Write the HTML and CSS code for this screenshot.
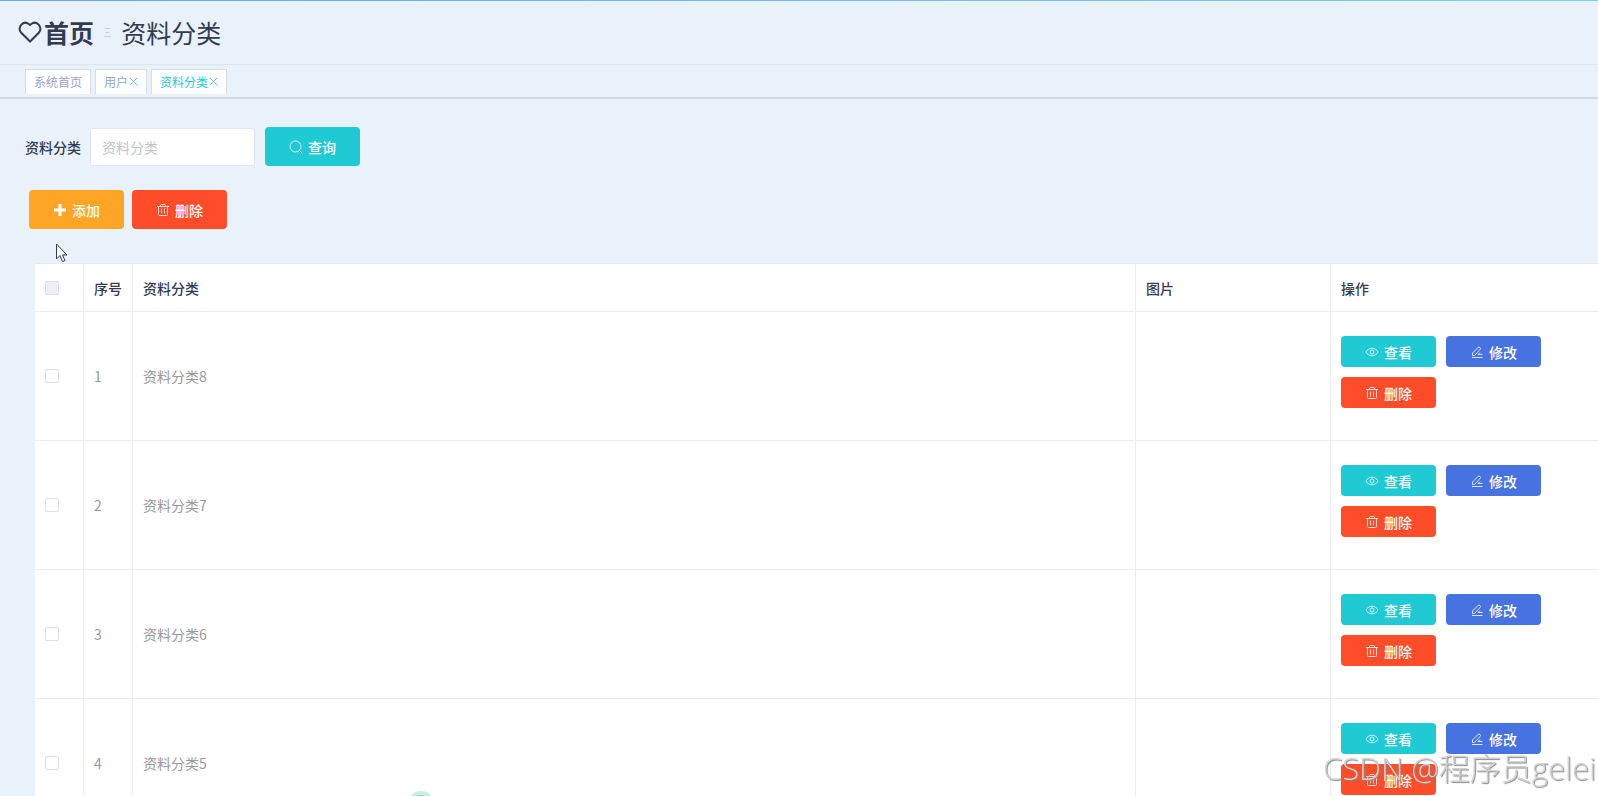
FILE: index.html
```html
<!DOCTYPE html>
<html lang="zh-CN">
  <head>
    <meta charset="UTF-8" />
    <meta name="viewport" content="width=device-width, initial-scale=1.0" />
    <title>资料分类</title>
    <link rel="stylesheet" href="styles.css">
  </head>
  <body>
    <!-- 图标 -->
    <svg class="sprite" aria-hidden="true">
      <symbol id="i-eye" viewBox="0 0 14 14">
        <path d="M1 7C3.500 2 10.500 2 13 7C10.500 12 3.500 12 1 7Z" />
        <circle cx="7" cy="7" r="2" />
      </symbol>
      <symbol id="i-edit" viewBox="0 0 14 14">
        <path d="M2.500 8L8 2.500Q9 1.500 10 2.500Q11 3.500 10 4.500L4.500 10.500H2.500ZM2 12.500H12.500M10 7.500L8 9.500H12.500" />
      </symbol>
      <symbol id="i-delete" viewBox="0 0 14 14">
        <path d="M1 3.500H13M4 3.500L5 1.500H9L10 3.500M2.500 3.500V11.500Q2.500 12.500 3.500 12.500H10.500Q11.500 12.500 11.500 11.500V3.500M5.500 5.500V10.500M8.500 5.500V10.500" />
      </symbol>
    </svg>

    <header class="breadcrumb">
      <svg class="heart" viewBox="0 0 24 24"><path d="M12 21.500L3 12.500C-1 7 5 .5 10 3.500L12 5L14 3.500C19 .5 25 7 21 12.500Z" /></svg>
      <a class="home" href="#">首页</a>
      <span class="separator">Ξ</span>
      <span class="current">资料分类</span>
    </header>

    <nav class="tags">
      <a class="tag" href="#">系统首页</a>
      <a class="tag" href="#">用户<svg class="close" viewBox="0 0 10 10"><path d="M1 1L9 9M9 1L1 9" /></svg></a>
      <a class="tag active" href="#">资料分类<svg class="close" viewBox="0 0 10 10"><path d="M1 1L9 9M9 1L1 9" /></svg></a>
    </nav>

    <main class="content">
      <form class="search">
        <label for="category">资料分类</label>
        <input id="category" type="text" placeholder="资料分类" />
        <button type="button" class="btn teal">
          <svg class="icon" viewBox="0 0 14 14"><circle cx="6.500" cy="6.500" r="5.500" /><path d="M10.500 10.500L13.500 13.500" /></svg>查询
        </button>
      </form>

      <div class="actions">
        <button type="button" class="btn orange">
          <svg class="icon plus" viewBox="0 0 14 14"><path d="M7 1V13M1 7H13" /></svg>添加
        </button>
        <button type="button" class="btn red"><svg class="icon"><use href="#i-delete" /></svg>删除</button>
      </div>

      <table class="list">
        <colgroup>
          <col class="col-check" />
          <col class="col-index" />
          <col class="col-name" />
          <col class="col-image" />
          <col class="col-action" />
        </colgroup>
        <thead>
          <tr>
            <th><input type="checkbox" class="check all" aria-label="全选" /></th>
            <th>序号</th>
            <th>资料分类</th>
            <th>图片</th>
            <th>操作</th>
          </tr>
        </thead>
        <tbody>
          <tr>
            <td><input type="checkbox" class="check" aria-label="选择1" /></td>
            <td>1</td>
            <td>资料分类8</td>
            <td></td>
            <td>
              <div class="row-actions">
                <button type="button" class="btn small teal"><svg class="icon"><use href="#i-eye" /></svg>查看</button>
                <button type="button" class="btn small blue"><svg class="icon"><use href="#i-edit" /></svg>修改</button>
                <button type="button" class="btn small red"><svg class="icon"><use href="#i-delete" /></svg>删除</button>
              </div>
            </td>
          </tr>
          <tr>
            <td><input type="checkbox" class="check" aria-label="选择2" /></td>
            <td>2</td>
            <td>资料分类7</td>
            <td></td>
            <td>
              <div class="row-actions">
                <button type="button" class="btn small teal"><svg class="icon"><use href="#i-eye" /></svg>查看</button>
                <button type="button" class="btn small blue"><svg class="icon"><use href="#i-edit" /></svg>修改</button>
                <button type="button" class="btn small red"><svg class="icon"><use href="#i-delete" /></svg>删除</button>
              </div>
            </td>
          </tr>
          <tr>
            <td><input type="checkbox" class="check" aria-label="选择3" /></td>
            <td>3</td>
            <td>资料分类6</td>
            <td></td>
            <td>
              <div class="row-actions">
                <button type="button" class="btn small teal"><svg class="icon"><use href="#i-eye" /></svg>查看</button>
                <button type="button" class="btn small blue"><svg class="icon"><use href="#i-edit" /></svg>修改</button>
                <button type="button" class="btn small red"><svg class="icon"><use href="#i-delete" /></svg>删除</button>
              </div>
            </td>
          </tr>
          <tr>
            <td><input type="checkbox" class="check" aria-label="选择4" /></td>
            <td>4</td>
            <td>资料分类5</td>
            <td></td>
            <td>
              <div class="row-actions">
                <button type="button" class="btn small teal"><svg class="icon"><use href="#i-eye" /></svg>查看</button>
                <button type="button" class="btn small blue"><svg class="icon"><use href="#i-edit" /></svg>修改</button>
                <button type="button" class="btn small red"><svg class="icon"><use href="#i-delete" /></svg>删除</button>
              </div>
            </td>
          </tr>
        </tbody>
      </table>
    </main>

    <svg class="cursor" viewBox="0 0 12 20"><path d="M1 1V16L4.500 12.500L7 18.500L9.500 17.500L7 12H11.500Z" /></svg>
    <div class="bubble"></div>
    <div class="watermark">CSDN @程序员gelei</div>
  </body>
</html>
```
FILE: styles.css
```css
* {
  box-sizing: border-box;
}
html {
  height: 100%;
}
body {
  height: 100%;
  margin: 0;
  padding-top: 1px;
  overflow: hidden;
  background: #e9f1fb linear-gradient(90deg, #68a5fb, #74d3ea) top / 100% 1px no-repeat;
  color: #333b50;
  font-family: "Noto Sans CJK SC", sans-serif;
  font-size: 14px;
}
a {
  color: inherit;
  text-decoration: none;
}
svg {
  fill: none;
  stroke: currentColor;
}
.sprite {
  display: none;
}

/* 面包屑 */
.breadcrumb {
  display: flex;
  align-items: center;
  height: 64px;
  padding: 0 18px 2px;
  border-bottom: 1px solid #dde5ef;
  font-size: 25px;
}
.heart {
  width: 24px;
  height: 24px;
  margin-right: 2px;
  stroke-width: 2;
}
.home {
  font-weight: bold;
}
.separator {
  margin: 0 10px;
  color: #c9d0da;
  font-size: 12px;
}

/* 标签栏 */
.tags {
  display: flex;
  gap: 4px;
  height: 34px;
  padding: 4px 25px 0;
  border-bottom: 2px solid #d0dae5;
}
.tag {
  display: flex;
  align-items: center;
  height: 25px;
  padding: 0 8px 1px;
  background: #fff;
  border: 1px solid #d8dce5;
  border-bottom: none;
  color: #9aa5c4;
  font-size: 12px;
}
.tag.active {
  color: #22cad6;
}
.close {
  width: 9px;
  height: 9px;
  margin-left: 1px;
  color: #5fbfbb;
}

.content {
  padding: 28px 0 0 25px;
}
.search {
  display: flex;
  align-items: center;
}
.search label {
  font-weight: 500;
}
.search input {
  width: 165px;
  height: 38px;
  margin: 0 10px 0 9px;
  padding: 0 11px;
  background: #fff;
  border: 1px solid #e0e6f0;
  border-radius: 3px;
  font: inherit;
}
.search input::placeholder {
  color: #c0c4cc;
}
.actions {
  display: flex;
  gap: 8px;
  margin: 24px 0 34px 4px;
}

.btn {
  display: flex;
  align-items: center;
  justify-content: center;
  gap: 5px;
  width: 95px;
  height: 39px;
  padding: 0;
  border: none;
  border-radius: 4px;
  color: #fff;
  font: inherit;
  font-weight: 500;
  cursor: pointer;
}
.btn.small {
  height: 31px;
}
.icon {
  width: 14px;
  height: 14px;
  opacity: 0.8;
}
.plus {
  stroke-width: 3;
  opacity: 1;
}
.teal {
  background: #20cad5;
}
.blue {
  background: #4673e0;
}
.orange {
  background: #ffa526;
}
.red {
  background: #ff4c29;
}

/* 表格 */
.list {
  width: calc(100% - 10px);
  margin-left: 10px;
  table-layout: fixed;
  border-collapse: separate;
  border-spacing: 0;
  border-top: 1px solid #e6e9f0;
  background: #fff;
}
.list th,
.list td {
  padding: 0 10px;
  border-right: 1px solid #ebedf1;
  border-bottom: 1px solid #ebedf1;
  text-align: left;
}
.list th:last-child,
.list td:last-child {
  border-right: none;
}
.list th {
  height: 48px;
  font-weight: 500;
}
.list td {
  color: #999;
}
.col-check {
  width: 49px;
}
.col-index {
  width: 49px;
}
.col-image {
  width: 195px;
}
.col-action {
  width: 267px;
}
.check {
  display: block;
  width: 14px;
  height: 14px;
  margin: 0;
  appearance: none;
  background: #fff;
  border: 1px solid #dcdfe6;
  border-radius: 2px;
}
.check.all {
  background: #edf0fa;
}
.row-actions {
  display: flex;
  flex-wrap: wrap;
  gap: 10px;
  padding: 24px 0 32px;
}

/* 浮层 */
.cursor {
  position: fixed;
  top: 243px;
  left: 55px;
  width: 13px;
  height: 20px;
  fill: #fff;
  stroke: #333b50;
}
.bubble {
  position: fixed;
  bottom: -23px;
  left: 407px;
  width: 28px;
  height: 28px;
  background: #6fd3a4;
  border: 4px solid #c5f0da;
  border-radius: 50%;
}
.watermark {
  position: fixed;
  right: 2px;
  bottom: 6px;
  color: #d2d2d2;
  font-family: "Open Sans", "Noto Sans CJK SC", sans-serif;
  font-size: 31px;
  font-weight: 300;
  line-height: 44px;
  text-shadow: 1px 1px 1px #888;
}
```
